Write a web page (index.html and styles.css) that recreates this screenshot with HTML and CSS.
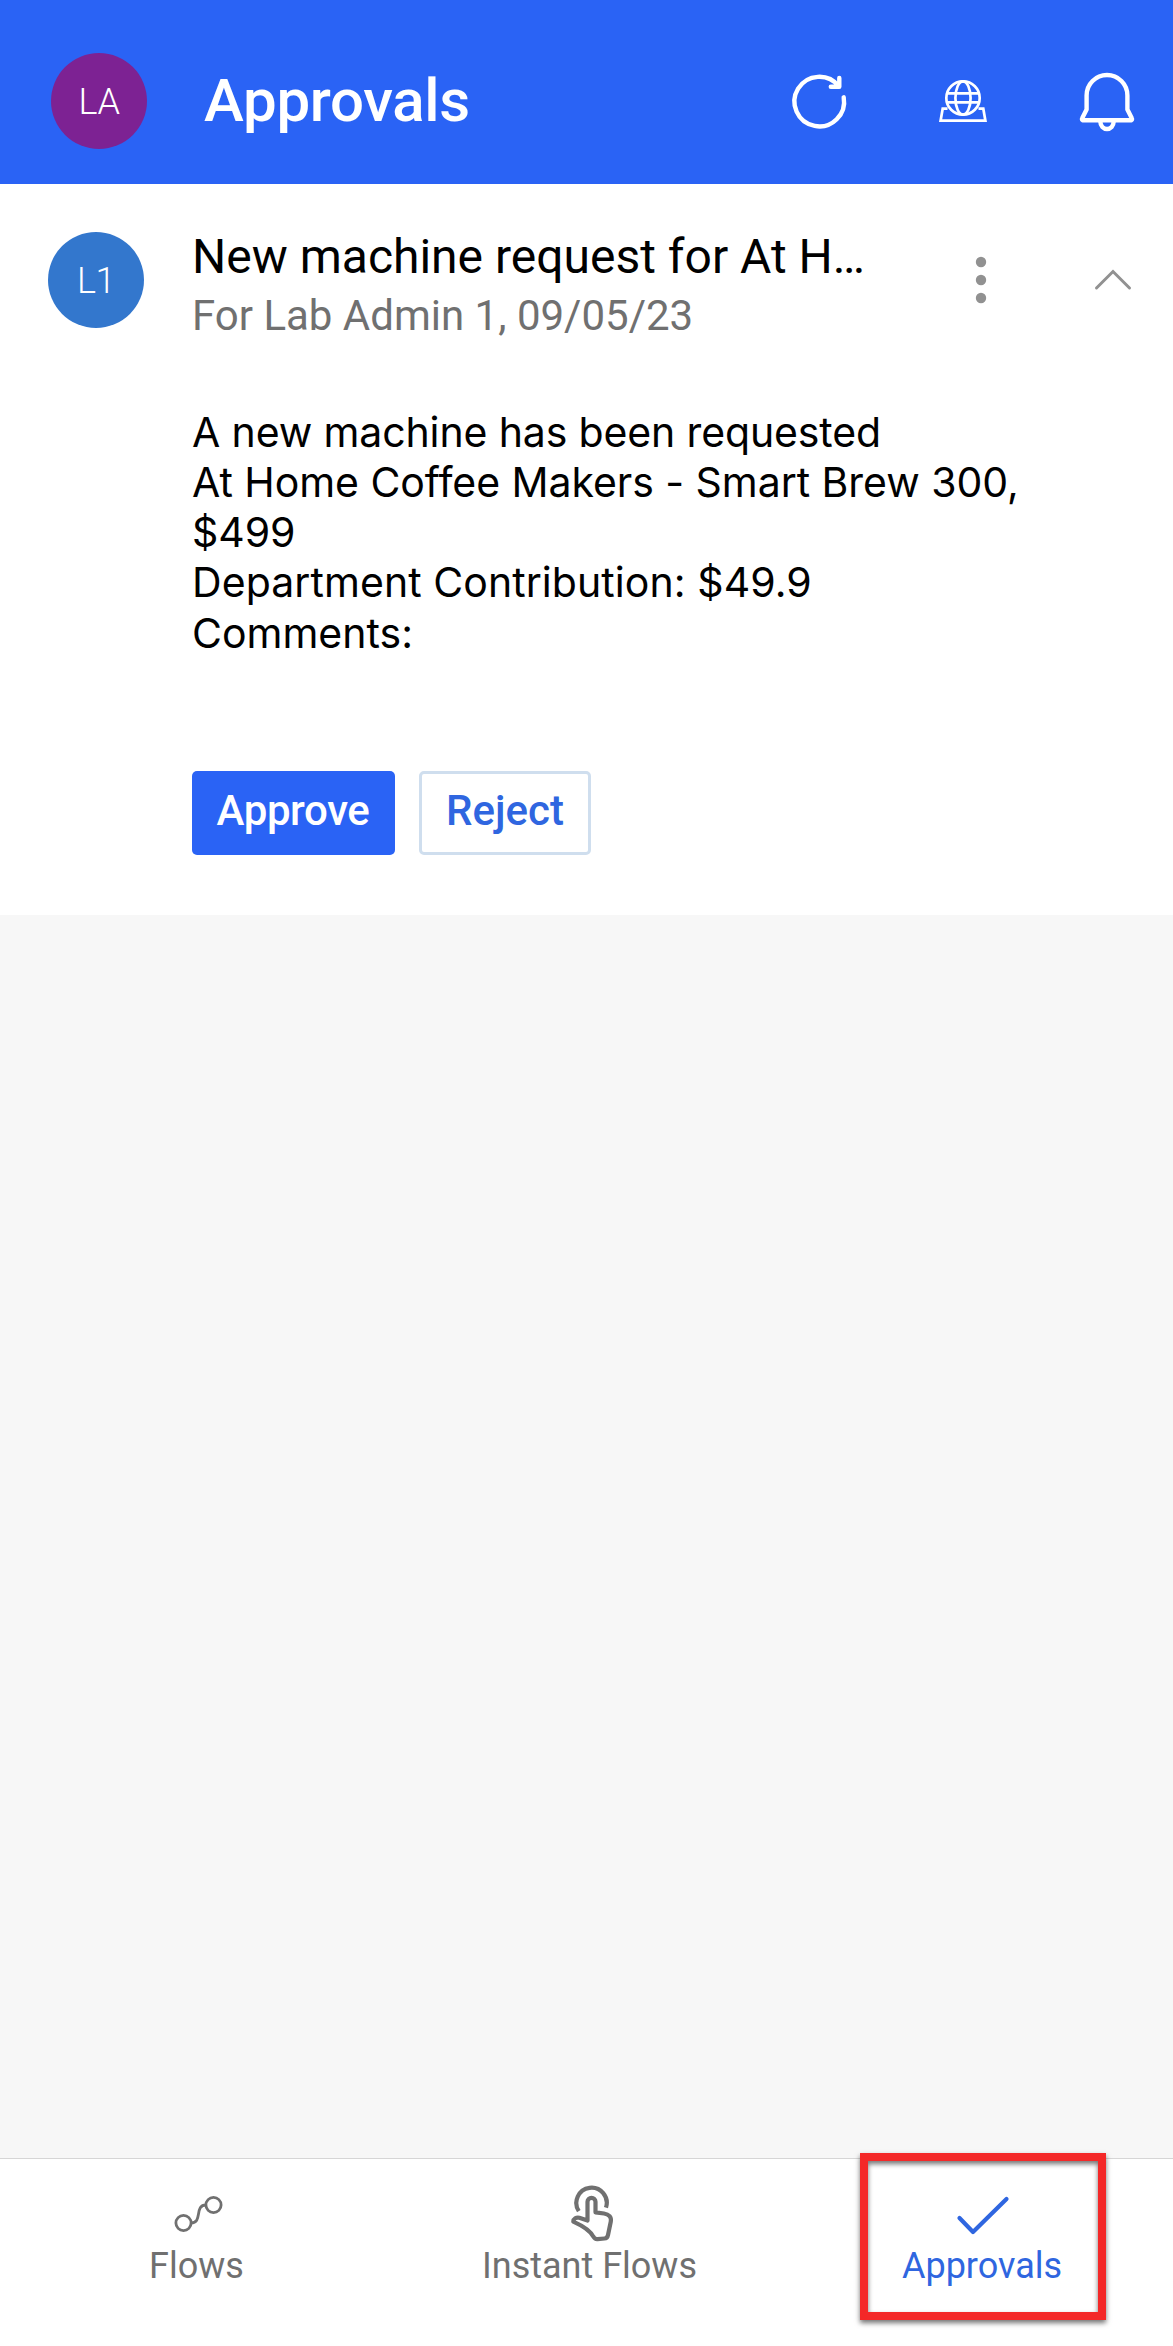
FILE: index.html
```html
<!DOCTYPE html>
<html lang="en">
<head>
<meta charset="utf-8">
<meta name="viewport" content="width=device-width">
<title>Approvals</title>
<link rel="stylesheet" href="styles.css">
</head>
<body>
<div class="screen">
  <header class="topbar">
    <div class="avatar avatar-user">LA</div>
    <h1 class="topbar-title">Approvals</h1>
    <div class="topbar-actions">
      <svg class="action-icon" viewBox="0 0 72 72" fill="none" stroke="#fff" stroke-width="4.4" stroke-linecap="round" stroke-linejoin="round"><path d="M60.7 32.3A24.800 24.800 0 1 1 55.800 21.300M56.300 13v8.700H47.800"/></svg>
      <svg class="action-icon" viewBox="0 0 72 72" fill="none" stroke="#fff" stroke-width="2.7"><circle cx="36" cy="33" r="16.7"/><ellipse cx="36" cy="33" rx="7.6" ry="16.7"/><path d="M21 28.300h30M21 37.300h30M20.5 43.7h-4.8L13.6 55.700h44.8l-2.1-12h-4.8"/></svg>
      <svg class="action-icon" viewBox="0 0 72 72" fill="none" stroke="#fff" stroke-width="4.4" stroke-linejoin="round"><path d="M11.5 55.200c-.8-.3-.6-1.400-.2-2.100l4.300-8.600V30.400a20.400 20.400 0 0 1 40.800 0v14.100l4.300 8.600c.4.7.6 1.800-.2 2.100z"/><path d="M29.400 57a6.600 7 0 0 0 13.200 0"/></svg>
    </div>
  </header>
  <main class="content">
    <article class="card">
      <div class="card-head">
        <div class="avatar avatar-requester">L1</div>
        <div class="card-titles">
          <h2 class="card-title">New machine request for At H…</h2>
          <p class="card-subtitle">For Lab Admin 1, 09/05/23</p>
        </div>
        <svg class="more-icon" viewBox="0 0 48 48" fill="#919191"><circle cx="24" cy="6" r="5.200"/><circle cx="24" cy="24" r="5.200"/><circle cx="24" cy="42" r="5.200"/></svg>
        <svg class="chevron-icon" viewBox="0 0 48 48" fill="none" stroke="#919191" stroke-width="3" stroke-linecap="round"><path d="M7.500 32 24 15.500 40.500 32"/></svg>
      </div>
      <div class="card-body">
        <p class="line-intro">A new machine has been requested</p>
        <p class="line-machine">At Home Coffee Makers - Smart Brew 300, $499</p>
        <p class="line-cost">Department Contribution: $49.9</p>
        <p>Comments:</p>
      </div>
      <div class="card-actions">
        <button class="btn btn-primary">Approve</button>
        <button class="btn btn-outline">Reject</button>
      </div>
    </article>
  </main>
  <nav class="tabbar">
    <a class="tab"><svg class="tab-icon" viewBox="0 0 60 60" fill="none" stroke="#707070" stroke-width="2.800"><circle cx="16.500" cy="38" r="7.600"/><circle cx="46.500" cy="20" r="7.600"/><path d="M24 38C36 38 27 20 39 20"/></svg><span>Flows</span></a>
    <a class="tab"><svg class="tab-icon" viewBox="0 0 60 60" fill="none" stroke="#707070" stroke-width="4.200" stroke-linejoin="round"><path d="M18.800 26.200A15.200 15.200 0 1 1 46 22.600"/><path d="M27.500 35.500V16.800a4 4 0 0 1 8 0V27.300l8.500 1.200c5 .7 7.600 3.700 6.800 8l-2.800 13.500c-.5 2.500-1.300 3.400-3.500 3.500l-7 .7c-2 .2-3.200-.8-4.200-2.600-3.500-7-12-11.400-20-15 0-3 3-4.500 6-3.900z"/></svg><span>Instant Flows</span></a>
    <a class="tab tab-active"><svg class="tab-icon" viewBox="0 0 60 60" fill="none" stroke="#2f66e0" stroke-width="4.200" stroke-linecap="round" stroke-linejoin="round"><path d="M7.500 33 21 47 54.500 14"/></svg><span>Approvals</span><i class="highlight"></i></a>
  </nav>
</div>
</body>
</html>
```
FILE: styles.css
```css
* { box-sizing: border-box; }
body { margin: 0; font-family: Roboto, sans-serif; background: #fff; }
h1, h2, p { margin: 0; font-weight: 400; }
svg { display: block; flex: none; }

.screen { display: flex; flex-direction: column; width: 1173px; height: 2346px; overflow: hidden; }

.avatar { display: flex; flex: none; align-items: center; justify-content: center; width: 96px; height: 96px; border-radius: 50%; color: #fff; font-size: 36px; font-weight: 350; letter-spacing: -0.5px; padding-top: 1px; }
.avatar-user { background: #7d2293; }
.avatar-requester { margin-top: 7px; background: #3377cd; }

.topbar { display: flex; align-items: center; flex: none; height: 184px; padding: 18px 30px 0 51px; background: #2a63f5; color: #fff; }
.topbar-title { margin-left: 57px; font-size: 60px; font-weight: 500; line-height: 70px; letter-spacing: -0.3px; }
.topbar-actions { display: flex; gap: 72px; margin-left: auto; }
.action-icon { width: 72px; height: 72px; }

.content { flex: 1; min-height: 0; background: #f7f7f7; }
.card { height: 731px; padding: 41px 32px 0 48px; background: #fff; }
.card-head { display: flex; align-items: flex-start; height: 181.5px; }
.card-titles { width: 700px; margin-left: 48px; padding-top: 1px; white-space: nowrap; }
.card-title { font-size: 48px; line-height: 62px; color: #000; }
.card-subtitle { font-size: 42px; line-height: 56px; color: #707070; }
.more-icon { width: 48px; height: 48px; margin: 31px 0 0 65px; }
.chevron-icon { width: 48px; height: 48px; margin: 31px 4px 0 auto; }
.card-body { width: 850px; margin-left: 144px; font-family: Inter, sans-serif; font-size: 41px; line-height: 50.3px; color: #000; }
.line-intro { letter-spacing: -0.13px; }
.line-machine { letter-spacing: -0.05px; }
.line-cost { letter-spacing: 0.07px; }
.card-actions { display: flex; gap: 24px; margin: 113px 0 0 144px; }
.btn { height: 84px; padding: 0 0 3px; border: 0; border-radius: 5px; font: 500 42px/50px Roboto, sans-serif; }
.btn-primary { width: 203px; padding-right: 1px; background: #2a63f5; color: #fff; letter-spacing: -0.4px; }
.btn-outline { width: 172px; border: 3px solid #cfdeee; background: #fff; color: #2f66e0; }

.tabbar { display: flex; flex: none; height: 188px; border-top: 1px solid #d6d6d6; background: #fff; }
.tab { position: relative; display: flex; flex: 0 0 393px; flex-direction: column; align-items: center; padding-top: 26px; color: #707070; font-size: 36px; line-height: 42px; }
.tab-icon { width: 60px; height: 60px; }
.tab-active { color: #2f66e0; padding-right: 1px; }
.highlight { position: absolute; left: 74px; top: -6px; width: 246px; height: 167px; border: 8px solid #f42828; box-shadow: 0 3px 5px rgba(0, 0, 0, .55), inset 0 3px 5px rgba(0, 0, 0, .55); }
```
